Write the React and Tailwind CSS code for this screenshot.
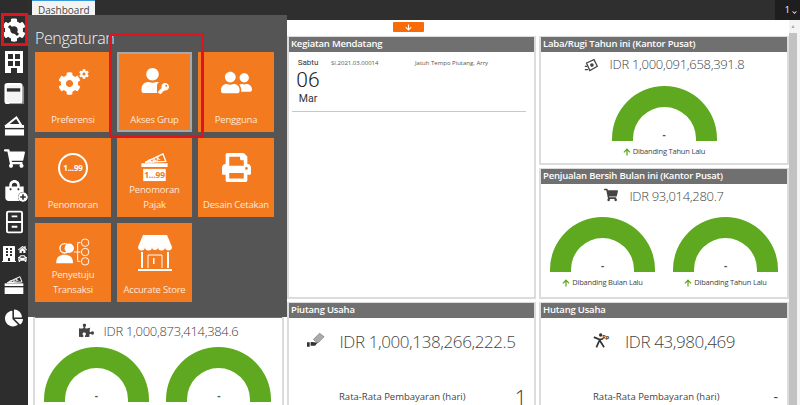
import React from "react";
import { FaShoppingCart, FaPuzzlePiece, FaChartPie, FaPrint, FaArrowDown, FaArrowUp, FaCog, FaUser, FaKey, FaUserFriends, FaChevronDown, FaPlusCircle, FaShoppingBag, FaCar, FaHome, FaBuilding } from "react-icons/fa";

const fontStack = { fontFamily: '"Open Sans", "Noto Sans", sans-serif' };

const WrenchGear = () => (
  <span className="relative flex h-[24px] w-[24px] items-center justify-center text-white">
    <FaCog size={24} />
    <svg viewBox="0 0 24 24" className="absolute left-0 top-0 h-[24px] w-[24px]">
      <path d="M7 8l5 5m-1-1l5 5" stroke="#2d2d2d" strokeWidth="3" fill="none" />
    </svg>
  </span>
);

const Offices = () => (
  <svg viewBox="0 0 18 22" className="h-[22px] w-[18px]">
    <path d="M0 0h18v22h-6v-5H6v5H0z" fill="#fff" />
    <path d="M3 3h5v5H3zM10 3h5v5h-5zM3 10h5v5H3zM10 10h5v5h-5z" fill="#2d2d2d" />
  </svg>
);

const Book = () => (
  <svg viewBox="0 0 22 24" className="h-[24px] w-[21px]">
    <rect x="1.5" y="1.5" width="17" height="20" rx="2" fill="#f4f4f4" stroke="#fff" strokeWidth="2" />
    <rect x="3" y="6" width="14" height="3.5" fill="#2d2d2d" />
    <path d="M20.5 4v18h-15" stroke="#999" strokeWidth="1" fill="none" />
  </svg>
);

const Wallet = () => (
  <svg viewBox="0 0 22 22" className="h-[22px] w-[21px]">
    <path d="M3 10L13 2l5 8z" fill="none" stroke="#fff" strokeWidth="2" />
    <rect x="1" y="10" width="20" height="11" fill="#fff" />
    <rect x="1" y="13" width="20" height="1.5" fill="#2d2d2d" />
  </svg>
);

const BagPlus = () => (
  <span className="relative text-white">
    <FaShoppingBag size={21} />
    <FaPlusCircle size={10} className="absolute -bottom-[1px] -right-[3px] rounded-full bg-[#2d2d2d]" />
  </span>
);

const Cabinet = () => (
  <svg viewBox="0 0 18 24" className="h-[24px] w-[17px]">
    <rect x="1" y="1" width="16" height="22" rx="1.5" fill="none" stroke="#fff" strokeWidth="2" />
    <path d="M1 12h16M6 6h6M6 17h6" stroke="#fff" strokeWidth="2" />
  </svg>
);

const Assets = () => (
  <span className="flex items-center gap-[1px] text-white">
    <FaBuilding size={16} />
    <span className="flex flex-col">
      <FaHome size={9} />
      <FaCar size={9} />
    </span>
  </span>
);

const TaxBox = ({ small }) => (
  <svg viewBox="0 0 30 32" className={small ? "h-[22px] w-[20px]" : "h-[30px] w-[29px]"}>
    <path d="M5 11L24 2l3 8z" fill="none" stroke="#fff" strokeWidth="1.5" />
    <text x="9" y="11" fontSize="6.5" fontWeight="700" fill="#fff" transform="rotate(-22 14 9)">TAX</text>
    <rect x="1" y="12" width="28" height="4" fill="#fff" />
    {!small && <rect x="3" y="18" width="24" height="13" fill="#fff" />}
    {!small && <text x="15" y="28" fontSize="9" fontWeight="700" fill="#f47a1f" textAnchor="middle">1...99</text>}
    {small && <rect x="1" y="18" width="28" height="10" fill="#fff" />}
  </svg>
);

const Circle99 = () => (
  <span className="flex h-[30px] w-[30px] items-center justify-center rounded-full border-2 border-white text-[8px] font-bold text-white">1...99</span>
);

const GearTile = () => (
  <span className="relative flex h-[26px] w-[31px] text-white">
    <FaCog size={23} className="mt-[3px]" />
    <FaCog size={10} className="absolute right-0 top-0" />
  </span>
);

const UserKey = () => (
  <span className="relative block h-[30px] w-[30px] text-white">
    <FaUser size={25} className="absolute left-0 top-0" />
    <FaKey size={13} className="absolute bottom-[3px] right-0 rounded-sm bg-[#f47a1f] p-[1px]" />
  </span>
);

const Approver = () => (
  <svg viewBox="0 0 38 30" className="h-[28px] w-[36px]">
    <circle cx="10" cy="11" r="5" fill="none" stroke="#fff" strokeWidth="1.5" />
    <path d="M1 27c0-7 4-9 9-9s9 2 9 9z" fill="#fff" />
    <circle cx="15" cy="11" r="5" fill="#fff" />
    <path d="M20 15h4M24 5v20M24 5h3M24 15h3M24 25h3" stroke="#fff" strokeWidth="1" fill="none" />
    <circle cx="32" cy="5" r="4" fill="none" stroke="#fff" />
    <circle cx="32" cy="15" r="4" fill="none" stroke="#fff" />
    <circle cx="32" cy="25" r="4" fill="none" stroke="#fff" />
  </svg>
);

const Store = () => (
  <svg viewBox="0 0 36 38" className="h-[38px] w-[36px]">
    <path d="M6 1h24l5 12H1z" fill="#fff" />
    <path d="M1 13a3 3 0 007 0 3 3 0 007 0 3 3 0 006 0 3 3 0 007 0 3 3 0 007 0z" fill="#fff" />
    <path d="M5 18v16M31 18v16M1 36h34" stroke="#fff" strokeWidth="2" />
    <path d="M11 34V21h14v13" stroke="#fff" fill="none" />
    <rect x="16" y="24" width="1.5" height="6" fill="#fff" />
  </svg>
);

const MoneyIcon = () => (
  <svg viewBox="0 0 18 18" className="h-[15px] w-[15px]">
    <path d="M3 6l9-4 4 8-9 5z" fill="none" stroke="#444" strokeWidth="1.5" />
    <circle cx="9.5" cy="8.5" r="2.2" fill="#444" />
    <path d="M1 10h3M1 14h4" stroke="#444" strokeWidth="1.5" />
  </svg>
);

const HandMoney = () => (
  <svg viewBox="0 0 20 18" className="h-[17px] w-[18px]">
    <path d="M7 9l7-7 5 4-7 7z" fill="#aaa" stroke="#666" strokeWidth=".6" />
    <path d="M0 12h3v5H0zM4 12c3-1 5 1 8 0l-3 4H4z" fill="#333" />
  </svg>
);

const RunningRp = () => (
  <svg viewBox="0 0 20 18" className="h-[17px] w-[17px]">
    <circle cx="9" cy="2.5" r="2" fill="#333" />
    <path d="M1 5l7 3 4-1M8 8l-4 9M8 9l5 8" stroke="#333" strokeWidth="2" fill="none" />
    <text x="11" y="7" fontSize="6.5" fontWeight="700" fill="#333">Rp</text>
  </svg>
);

const Gauge = ({ label }) => (
  <div className="flex w-[124px] flex-col items-center">
    <div className="relative h-[55px] w-[105px]">
      <svg viewBox="0 0 105 55" className="h-[55px] w-[105px]">
        <path d="M0 55V52.5a52.5 52.5 0 01105 0V55H84V52.5a31.5 31.5 0 00-63 0V55z" fill="#5ea91f" />
      </svg>
      <span className="absolute bottom-[2px] left-0 w-full text-center text-[10px] font-bold leading-[10px] text-[#555]">-</span>
    </div>
    {label && (
      <div className="mt-[4px] flex h-[14px] items-center gap-[2px] text-[7.5px] tracking-[-0.2px] whitespace-nowrap text-[#444]">
        <FaArrowUp size={8} className="text-[#5ea91f]" />
        {label}
      </div>
    )}
  </div>
);

const Card = ({ title, className = "", children }) => (
  <div className={`flex flex-col border-2 border-t-[1px] border-[#dcdcdc] bg-white ${className}`}>
    <div className="flex h-[15px] shrink-0 items-center bg-[#707070] pl-[2px] text-[9.5px] font-semibold tracking-[-0.2px] whitespace-nowrap text-white">{title}</div>
    {children}
  </div>
);

const Amount = ({ icon, children, className = "" }) => (
  <div className={`flex items-center justify-center font-light whitespace-nowrap text-[#444] ${className}`}>
    {icon}
    {children}
  </div>
);

const SideIcon = ({ children }) => (
  <div className="flex h-[32px] items-center justify-center">{children}</div>
);

const tiles = [
  { label: "Preferensi", icon: <GearTile /> },
  { label: "Akses Grup", icon: <UserKey />, selected: true },
  { label: "Pengguna", icon: <FaUserFriends size={31} className="text-white" /> },
  { label: "Penomoran", icon: <Circle99 /> },
  { label: "Penomoran Pajak", icon: <TaxBox />, tall: true },
  { label: "Desain Cetakan", icon: <FaPrint size={29} className="text-white" /> },
  { label: "Penyetuju Transaksi", icon: <Approver />, tall: true },
  { label: "Accurate Store", icon: <Store /> },
];

export default function App() {
  return (
    <div className="relative flex h-[405px] w-[800px] overflow-hidden bg-white" style={fontStack}>
      {/* sidebar */}
      <div className="z-20 flex w-[28px] shrink-0 flex-col bg-[#2d2d2d] pt-[14px] text-white">
        <SideIcon><WrenchGear /></SideIcon>
        <SideIcon><Offices /></SideIcon>
        <SideIcon><Book /></SideIcon>
        <SideIcon><Wallet /></SideIcon>
        <SideIcon><FaShoppingCart size={21} /></SideIcon>
        <SideIcon><BagPlus /></SideIcon>
        <SideIcon><Cabinet /></SideIcon>
        <SideIcon><Assets /></SideIcon>
        <SideIcon><TaxBox small /></SideIcon>
        <SideIcon><FaChartPie size={18} /></SideIcon>
      </div>

      <div className="flex min-w-0 flex-1 flex-col">
        {/* top bar */}
        <div className="flex h-[20px] shrink-0 items-start justify-between bg-[#2f2f2f] pl-[4px]">
          <div className="h-[20px] w-[63px] border-t-[1px] border-[#3a9ad9] bg-[#f4f4f4] pl-[6px] text-[10px] leading-[18px] text-[#444]">Dashboard</div>
          <div className="flex h-[20px] w-[25px] items-center justify-end gap-[2px] bg-[#1e1e1e] pr-[3px] text-[9px] text-white">
            1
            <FaChevronDown size={5} className="mt-[5px]" />
          </div>
        </div>

        <div className="flex min-h-0 flex-1">
          <div className="min-w-0 flex-1 pl-[5px]">
            <div className="flex h-[16px] justify-center pr-[6px] pt-[2px]">
              <div className="flex h-[10px] w-[31px] items-center justify-center rounded-[1px] bg-[#f76b0a] text-white">
                <FaArrowDown size={7} />
              </div>
            </div>
            <div className="grid grid-cols-[251px_249px_250px] grid-rows-[129px_131px_120px] gap-x-[3px] gap-y-[3px]">
              <Card title="" className="row-span-2" />

              <Card title="Kegiatan Mendatang" className="row-span-2">
                <div className="ml-[3px] mr-[8px] flex h-[60px] border-b-[1px] border-[#c8c8c8] pt-[5px]">
                  <div className="flex w-[32px] flex-col items-center font-['Roboto'] text-[#333]">
                    <span className="text-[8px] leading-[12px]">Sabtu</span>
                    <span className="text-[21px] leading-[23px] font-light text-[#222]">06</span>
                    <span className="text-[10.5px] leading-[14px]">Mar</span>
                  </div>
                  <span className="ml-[7px] w-[84px] text-[6px] leading-[12px] text-[#555]">SI.2021.03.00014</span>
                  <span className="text-[6px] leading-[12px] text-[#555]">Jatuh Tempo Piutang, Arry</span>
                </div>
              </Card>

              <Card title="Laba/Rugi Tahun ini (Kantor Pusat)">
                <Amount icon={<span className="mr-[11px]"><MoneyIcon /></span>} className="h-[26px] text-[13px] tracking-[-0.3px]">IDR 1,000,091,658,391.8</Amount>
                <div className="mt-[8px] flex justify-center">
                  <Gauge label="Dibanding Tahun Lalu" />
                </div>
              </Card>

              <Card title="Penjualan Bersih Bulan ini (Kantor Pusat)" className="col-start-3">
                <Amount icon={<FaShoppingCart size={14} className="mr-[11px] mb-[4px] text-[#444]" />} className="h-[26px] text-[13px] tracking-[-0.3px]">IDR 93,014,280.7</Amount>
                <div className="mt-[7px] flex justify-center">
                  <Gauge label="Dibanding Bulan Lalu" />
                  <Gauge label="Dibanding Tahun Lalu" />
                </div>
              </Card>

              <Card title="">
                <Amount icon={<FaPuzzlePiece size={15} className="mr-[10px] mb-[3px] text-[#444]" />} className="mt-[5px] h-[18px] text-[13px] tracking-[-0.3px]">IDR 1,000,873,414,384.6</Amount>
                <div className="mt-[6px] flex justify-center pr-[2px]">
                  <Gauge />
                  <Gauge />
                </div>
              </Card>

              <Card title="Piutang Usaha">
                <Amount icon={<span className="mr-[14px] mb-[6px]"><HandMoney /></span>} className="h-[48px] text-[17px] tracking-[-0.4px]">IDR 1,000,138,266,222.5</Amount>
                <div className="mt-[19px] flex items-center justify-between pl-[50px] pr-[7px] text-[#444]">
                  <span className="text-[9.5px]">Rata-Rata Pembayaran (hari)</span>
                  <span className="text-[22px] leading-[24px] font-light">1</span>
                </div>
              </Card>

              <Card title="Hutang Usaha">
                <Amount icon={<span className="mr-[15px] mb-[4px]"><RunningRp /></span>} className="h-[48px] text-[17px] tracking-[-0.4px]">IDR 43,980,469</Amount>
                <div className="mt-[19px] flex items-center justify-between pl-[52px] pr-[9px] text-[#444]">
                  <span className="text-[9.5px]">Rata-Rata Pembayaran (hari)</span>
                  <span className="text-[14px] leading-[24px]">-</span>
                </div>
              </Card>
            </div>
          </div>

          {/* scrollbar */}
          <div className="flex w-[11px] shrink-0 flex-col bg-[#f4f4f4] pr-[3px]">
            <div className="flex h-[13px] items-center justify-center text-[5px] text-[#aaa]">▲</div>
            <div className="flex-1 bg-[#c2c2c2]" />
          </div>
        </div>
      </div>

      {/* settings menu */}
      <div className="absolute left-[28px] top-[15px] z-10 h-[302px] w-[259px] bg-[#555555] pl-[7px] pt-[10px]">
        <div className="h-[27px] text-[16px] leading-[26px] font-light tracking-[-0.4px] text-[#f4f4f4]">Pengaturan</div>
        <div className="grid grid-cols-[76px_75px_76px] grid-rows-[80px_79px_79px] gap-x-[6px] gap-y-[6px]">
          {tiles.map((tile) => (
            <div
              key={tile.label}
              className={`flex flex-col items-center bg-[#f47a1f] px-[4px] text-center text-[9.5px] leading-[15px] tracking-[-0.2px] text-[#ffe9d8] ${tile.selected ? "border-2 border-[#a8a8a8] pb-[3px]" : "pb-[5px]"}`}
            >
              <div className={`flex items-center justify-center ${tile.tall ? "h-[45px] pt-[13px]" : "flex-1"}`}>{tile.icon}</div>
              <div className="mt-auto">{tile.label}</div>
            </div>
          ))}
        </div>
      </div>

      {/* red callouts */}
      <div className="absolute left-[1px] top-[13px] z-30 h-[33px] w-[27px] border-[3px] border-[#e0141e]" />
      <div className="absolute left-[109px] top-[33px] z-30 h-[105px] w-[95px] border-[3px] border-[#e0141e]" />
    </div>
  );
}
